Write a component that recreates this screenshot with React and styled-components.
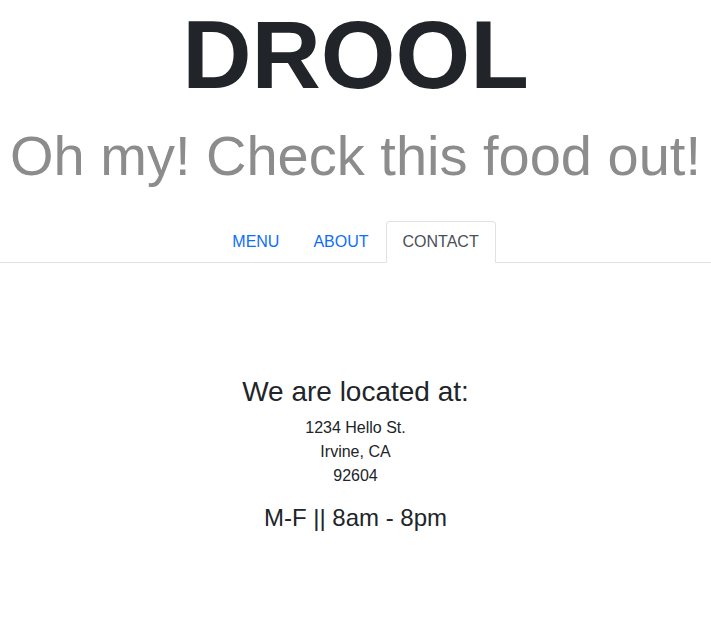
import React, { useState } from "react";
import styled, { createGlobalStyle } from "styled-components";

const GlobalStyle = createGlobalStyle`
  body {
    margin: 0;
    font-family: "Liberation Sans", Arial, sans-serif;
    color: #212529;
    background: #fff;
  }
`;

const Page = styled.div`
  display: flex;
  flex-direction: column;
  align-items: center;
`;

const Brand = styled.h1`
  margin: 0;
  font-size: 96px;
  font-weight: 700;
  line-height: 1.15;
  color: #212529;
`;

const Tagline = styled.h2`
  margin: 12px 0 0;
  font-size: 56px;
  font-weight: 400;
  line-height: 1.2;
  color: #8c8c8c;
  white-space: nowrap;
`;

const Tabs = styled.ul`
  align-self: stretch;
  display: flex;
  justify-content: center;
  list-style: none;
  margin: 31px 0 0;
  padding: 0;
  border-bottom: 1px solid #dee2e6;
`;

const Tab = styled.li`
  margin-bottom: -1px;
`;

const TabLink = styled.a`
  display: block;
  padding: 8px 16px;
  font-size: 16px;
  line-height: 24px;
  text-decoration: none;
  cursor: pointer;
  border: 1px solid transparent;
  border-color: ${(p) => (p.$active ? "#dee2e6 #dee2e6 #fff" : "transparent")};
  border-top-left-radius: 4px;
  border-top-right-radius: 4px;
  color: ${(p) => (p.$active ? "#495057" : "#0d6efd")};
  background: ${(p) => (p.$active ? "#fff" : "transparent")};
`;

const Contact = styled.section`
  margin-top: 112px;
  display: flex;
  flex-direction: column;
  align-items: center;
  text-align: center;
`;

const Heading = styled.h3`
  margin: 0 0 8px;
  font-size: 28px;
  font-weight: 400;
  line-height: 1.2;
`;

const Address = styled.p`
  margin: 0 0 16px;
  font-size: 16px;
  line-height: 24px;
`;

const Hours = styled.h4`
  margin: 0;
  font-size: 24px;
  font-weight: 400;
  line-height: 1.2;
`;

const tabs = ["MENU", "ABOUT", "CONTACT"];

export default function App() {
  const [active, setActive] = useState("CONTACT");
  return (
    <Page>
      <GlobalStyle />
      <Brand>DROOL</Brand>
      <Tagline>Oh my! Check this food out!</Tagline>
      <Tabs>
        {tabs.map((t) => (
          <Tab key={t}>
            <TabLink $active={active === t} onClick={() => setActive(t)}>
              {t}
            </TabLink>
          </Tab>
        ))}
      </Tabs>
      <Contact>
        <Heading>We are located at:</Heading>
        <Address>
          1234 Hello St.
          <br />
          Irvine, CA
          <br />
          92604
        </Address>
        <Hours>M-F || 8am - 8pm</Hours>
      </Contact>
    </Page>
  );
}
